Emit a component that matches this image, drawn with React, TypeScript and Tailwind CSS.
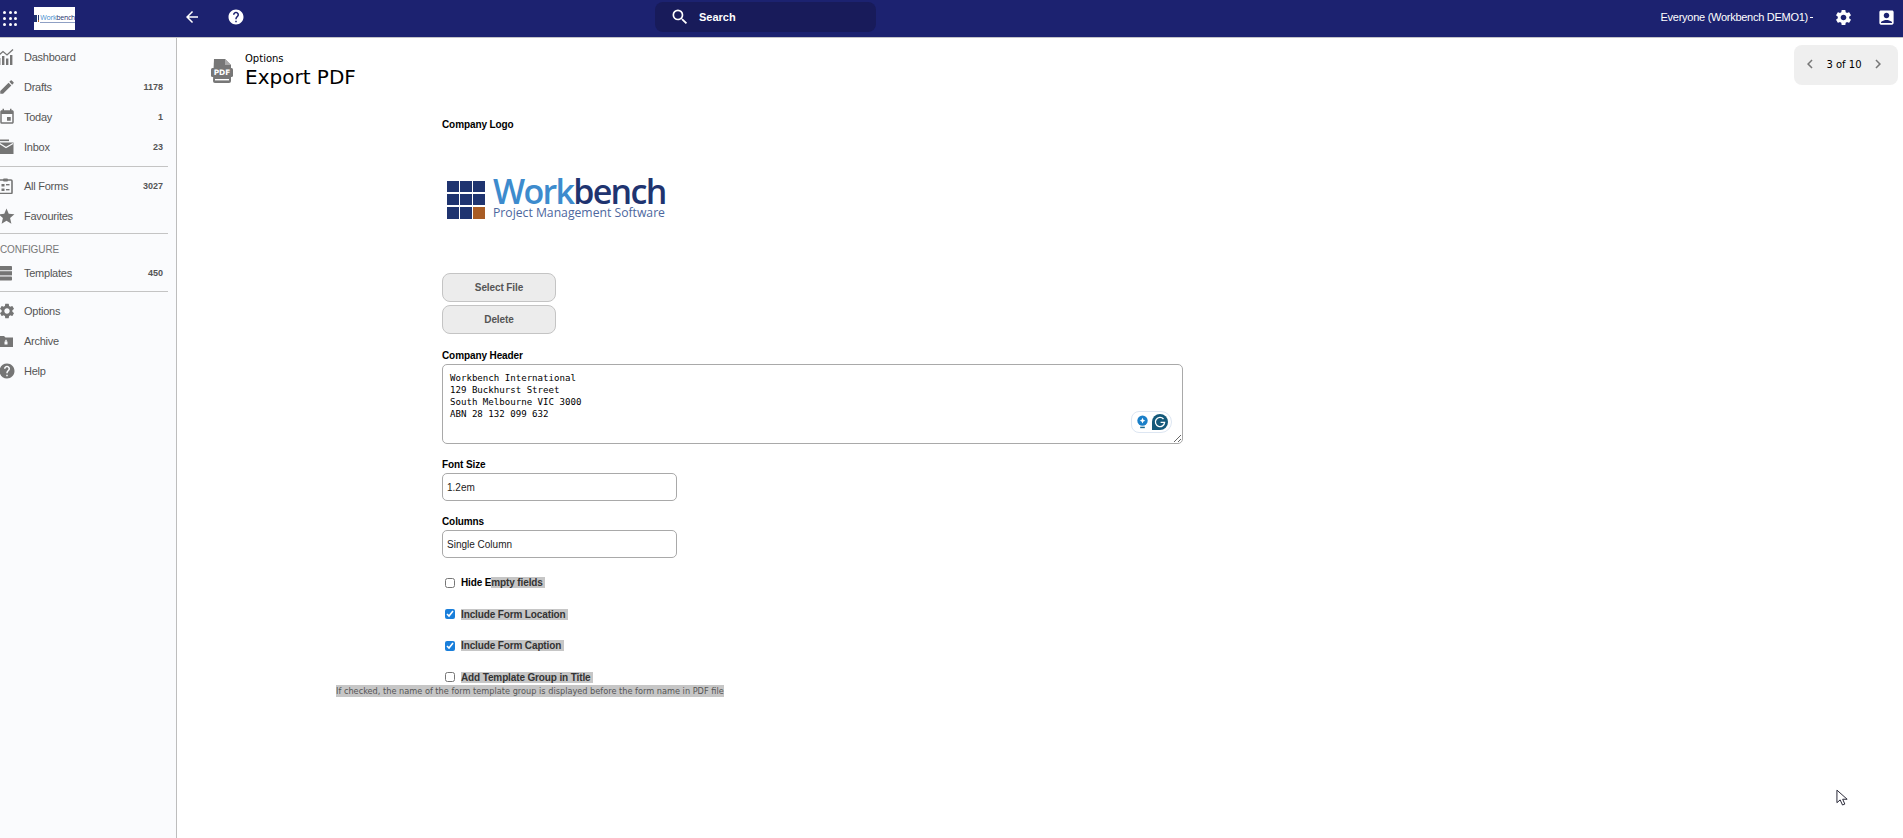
import { ReactNode } from 'react'
import {
  MdAccountBox,
  MdArrowBack,
  MdChevronLeft,
  MdChevronRight,
  MdEdit,
  MdEvent,
  MdHelp,
  MdSearch,
  MdSettings,
  MdStar,
} from 'react-icons/md'

const arial = { fontFamily: '"Liberation Sans", Arial, sans-serif' }

const DashboardIcon = () => (
  <svg viewBox="0 0 16 16" className="w-[16px] h-[16px] fill-[#757575]">
    <rect x="0" y="9" width="2.4" height="7" />
    <rect x="4" y="7" width="2.4" height="9" />
    <rect x="8" y="9.5" width="2.4" height="6.5" />
    <rect x="12" y="6" width="2.4" height="10" />
    <path d="M0 7 L5 2.5 L9 6 L15 0.5" fill="none" stroke="#757575" strokeWidth="1.3" />
  </svg>
)

const InboxIcon = () => (
  <svg viewBox="0 0 16 16" className="w-[16px] h-[16px] fill-[#757575]">
    <rect x="0" y="0.5" width="11" height="1.6" />
    <path d="M1 3.5 H15.5 V15 H1 Z" />
    <path d="M1.5 4.5 L8 8.5 L15 4.5" fill="none" stroke="#fafbfd" strokeWidth="1.3" />
  </svg>
)

const FormsIcon = () => (
  <svg viewBox="0 0 16 16" className="w-[16px] h-[16px]">
    <rect x="1" y="2" width="13" height="13.5" rx="1" fill="none" stroke="#757575" strokeWidth="1.6" />
    <rect x="5" y="0.5" width="5" height="3" rx="1" fill="#757575" />
    <rect x="3.5" y="6" width="3" height="2.5" fill="#757575" />
    <rect x="8" y="6" width="3.5" height="1.4" fill="#757575" />
    <rect x="3.5" y="10.5" width="3" height="2.5" fill="#757575" />
    <rect x="8" y="11" width="3.5" height="1.4" fill="#757575" />
  </svg>
)

const TemplatesIcon = () => (
  <svg viewBox="0 0 16 16" className="w-[16px] h-[16px] fill-[#757575]">
    <rect x="1" y="1" width="13" height="4.2" rx="0.8" />
    <rect x="1" y="6.2" width="13" height="4.2" />
    <rect x="1" y="11.4" width="13" height="4.2" rx="0.8" />
  </svg>
)

const ArchiveIcon = () => (
  <svg viewBox="0 0 16 16" className="w-[16px] h-[16px] fill-[#757575]">
    <path d="M0 3 H6 L7.5 4.5 H15 V14 H0 Z" />
    <rect x="6.5" y="8.5" width="3" height="3" fill="#fafbfd" />
    <rect x="7.3" y="6.8" width="1.4" height="2" fill="#fafbfd" />
  </svg>
)

const AppsIcon = () => (
  <div className="grid grid-cols-3 gap-[2.6px] w-[14px]">
    {Array.from({ length: 9 }).map((_, i) => (
      <span key={i} className="w-[3.2px] h-[3.2px] rounded-full bg-white" />
    ))}
  </div>
)

const PdfIcon = () => (
  <svg viewBox="0 0 22 24" className="w-[22px] h-[24px] shrink-0">
    <path d="M3 0 H14 L20 6 V22 a2 2 0 0 1 -2 2 H4 a2 2 0 0 1 -2 -2 Z" fill="#777" />
    <path d="M14 0 V6 H20" fill="#aaa" />
    <rect x="0" y="9" width="22" height="9" rx="1.5" fill="#777" />
    <text x="11" y="16.4" textAnchor="middle" fontSize="7.4" fontWeight="700" fill="#fff" fontFamily="DejaVu Sans, sans-serif">
      PDF
    </text>
    <rect x="4" y="20" width="14" height="1.4" fill="#fff" />
  </svg>
)

function Logo() {
  return (
    <div className="flex items-center gap-[8px] ml-[5px] mt-[46px] h-[45px]">
      <div className="grid grid-cols-3 grid-rows-3 gap-[1.5px] w-[38px] h-[38px]">
        {Array.from({ length: 9 }).map((_, i) => (
          <span key={i} className={i === 8 ? 'bg-[#a85c25]' : 'bg-[#1f3470]'} />
        ))}
      </div>
      <div className="flex flex-col" style={{ fontFamily: '"Open Sans", sans-serif' }}>
        <div className="text-[34px] leading-[31px] tracking-[-1.7px] font-semibold -mt-[4px]">
          <span className="text-[#3d8bcd]">Work</span>
          <span className="text-[#1f3470]">bench</span>
        </div>
        <div className="text-[12.2px] leading-[12px] text-[#4d679e] font-medium whitespace-nowrap">
          Project Management Software
        </div>
      </div>
    </div>
  )
}

function SmallLogo() {
  return (
    <div className="ml-[17px] mt-[3px] w-[41px] h-[23px] bg-white flex items-center justify-center gap-[1px]">
      <div className="grid grid-cols-3 grid-rows-3 gap-[0.4px] w-[7px] h-[7px]">
        {Array.from({ length: 9 }).map((_, i) => (
          <span key={i} className={i === 8 ? 'bg-[#a85c25]' : 'bg-[#1f3470]'} />
        ))}
      </div>
      <div className="flex flex-col" style={{ fontFamily: '"Open Sans", sans-serif' }}>
        <div className="text-[7px] leading-[7px] tracking-[-0.3px]">
          <span className="text-[#3d8bcd]">Work</span>
          <span className="text-[#1f3470]">bench</span>
        </div>
        <div className="h-[1px] mt-[1px] bg-[#8fa0c4]" />
      </div>
    </div>
  )
}

function NavItem({ icon, label, count }: { icon: ReactNode; label: string; count?: string }) {
  return (
    <div className="flex items-center h-[30px] pr-[13px]">
      <div className="w-[24px] -ml-[2px] flex items-center shrink-0">{icon}</div>
      <span className="ml-[2px] text-[11px] tracking-[-0.25px] text-[#555]">{label}</span>
      {count && <span className="ml-auto pt-[1px] text-[9px] font-bold text-[#555]">{count}</span>}
    </div>
  )
}

const Divider = () => <div className="h-[1px] bg-[#c4c4c4] w-[168px]" />

function Sidebar() {
  return (
    <aside className="w-[177px] shrink-0 bg-[#fafbfd] border-r border-[#bdbdbd] pt-[4px]">
      <NavItem icon={<DashboardIcon />} label="Dashboard" />
      <NavItem icon={<MdEdit size={18} className="text-[#757575]" />} label="Drafts" count="1178" />
      <NavItem icon={<MdEvent size={18} className="text-[#757575]" />} label="Today" count="1" />
      <NavItem icon={<InboxIcon />} label="Inbox" count="23" />
      <div className="mt-[4px]"><Divider /></div>
      <div className="mt-[4px]">
        <NavItem icon={<FormsIcon />} label="All Forms" count="3027" />
        <NavItem icon={<MdStar size={19} className="text-[#757575] -ml-[1px]" />} label="Favourites" />
      </div>
      <div className="mt-[2px]"><Divider /></div>
      <div className="mt-[10px] h-[12px] leading-[12px] text-[10px] tracking-[-0.1px] text-[#777]">CONFIGURE</div>
      <div className="mt-[2px]">
        <NavItem icon={<TemplatesIcon />} label="Templates" count="450" />
      </div>
      <div className="mt-[3px]"><Divider /></div>
      <div className="mt-[4px]">
        <NavItem icon={<MdSettings size={18} className="text-[#757575]" />} label="Options" />
        <NavItem icon={<ArchiveIcon />} label="Archive" />
        <NavItem icon={<MdHelp size={18} className="text-[#757575]" />} label="Help" />
      </div>
    </aside>
  )
}

function TopBar() {
  return (
    <header className="relative h-[38px] shrink-0 bg-[#1c2270] border-b border-[#c4c4c8] pb-[3px] flex items-center text-white">
      <div className="ml-[3px] mt-[3px]"><AppsIcon /></div>
      <SmallLogo />
      <MdArrowBack size={18} className="ml-[108px]" />
      <MdHelp size={18} className="ml-[26px]" />
      <div className="ml-[410px] w-[221px] h-[30px] rounded-lg bg-[#181b5a] flex items-center pl-[15px]">
        <MdSearch size={20} />
        <span className="ml-[9px] text-[11px] font-bold">Search</span>
      </div>
      <span className="ml-auto text-[11px] tracking-[-0.27px]">Everyone (Workbench DEMO1)</span>
      <span className="ml-[2px] w-[3px] h-[1px] bg-white" />
      <MdSettings size={19} className="ml-[21px]" />
      <MdAccountBox size={19} className="ml-[24px] mr-[7px]" />
    </header>
  )
}

function FieldLabel({ text }: { text: string }) {
  return <div className="mt-[15px] mb-[2px] h-[12px] leading-[12px] text-[10px] tracking-[-0.1px] font-bold text-black">{text}</div>
}

function GrayButton({ text }: { text: string }) {
  return (
    <button className="w-[114px] h-[29px] rounded-lg border border-[#c4c4c4] bg-[#ececec] text-[10px] tracking-[-0.1px] font-bold text-[#555]">
      {text}
    </button>
  )
}

function TextInput({ value }: { value: string }) {
  return (
    <input
      readOnly
      value={value}
      className="block w-[235px] h-[28px] px-[4px] rounded-[5px] border border-[#a9a9a9] bg-white text-[10px] text-[#222] outline-none"
    />
  )
}

function CheckRow({ checked, plain, marked }: { checked: boolean; plain?: string; marked: string }) {
  return (
    <div className="flex items-center h-[14px] mt-[17.5px]">
      <input
        type="checkbox"
        readOnly
        checked={checked}
        className="w-[10px] h-[10px] ml-[3px] accent-[#1a7fdb]"
      />
      <span className="ml-[6px] text-[10px] tracking-[-0.13px] leading-[13px] font-bold">
        {plain && <span className="text-black">{plain}</span>}
        <span className="bg-[#c6c6c6] text-[#333] whitespace-pre">{marked}</span>
      </span>
    </div>
  )
}

function GrammarlyBadge() {
  return (
    <div className="absolute right-[11px] bottom-[11px] w-[41px] h-[22px] rounded-l-[8px] rounded-r-[11px] border border-[#dde6f2] bg-white flex items-center justify-center gap-[3px]">
      <svg viewBox="0 0 14 16" className="w-[13px] h-[15px]">
        <circle cx="7" cy="6" r="5.6" fill="#1a7fc8" />
        <path d="M7 3 L8 5 L10 6 L8 7 L7 9 L6 7 L4 6 L6 5 Z" fill="#fff" />
        <rect x="4.5" y="12.5" width="5" height="1.6" fill="#1a6a90" />
      </svg>
      <svg viewBox="0 0 16 16" className="w-[16px] h-[16px]">
        <path d="M8 0 A8 8 0 1 1 8 16 H0 V8 A8 8 0 0 1 8 0 Z" fill="#14597a" />
        <path d="M11.5 5 A4.6 4.6 0 1 0 12.6 8.4 H8.6" fill="none" stroke="#fff" strokeWidth="1.3" />
      </svg>
    </div>
  )
}

function ExportForm() {
  return (
    <div className="ml-[231px] mt-[34px] w-[741px] flex flex-col items-start" style={arial}>
      <div className="h-[12px] leading-[12px] text-[10px] tracking-[-0.1px] font-bold text-black">Company Logo</div>
      <Logo />
      <div className="mt-[51px] flex flex-col gap-[3px]">
        <GrayButton text="Select File" />
        <GrayButton text="Delete" />
      </div>
      <div className="pt-[1px]">
        <FieldLabel text="Company Header" />
      </div>
      <div className="relative w-[741px] h-[80px]">
        <textarea
          readOnly
          defaultValue={'Workbench International\n129 Buckhurst Street\nSouth Melbourne VIC 3000\nABN 28 132 099 632'}
          className="block w-full h-full px-[7px] py-[7px] rounded-[5px] border border-[#a9a9a9] bg-white text-[9.1px] leading-[12px] text-black outline-none"
          style={{ fontFamily: '"DejaVu Sans Mono", monospace' }}
        />
        <GrammarlyBadge />
      </div>
      <FieldLabel text="Font Size" />
      <TextInput value="1.2em" />
      <FieldLabel text="Columns" />
      <TextInput value="Single Column" />
      <CheckRow checked={false} plain="Hide E" marked="mpty fields " />
      <CheckRow checked marked="Include Form Location " />
      <CheckRow checked marked="Include Form Caption " />
      <CheckRow checked={false} marked="Add Template Group in Title " />
      <div
        className="-ml-[106px] mt-[1px] h-[12px] leading-[12px] text-[8.2px] text-[#555] bg-[#c6c6c6] whitespace-nowrap"
        style={{ fontFamily: '"DejaVu Sans", sans-serif' }}
      >
        If checked, the name of the form template group is displayed before the form name in PDF file
      </div>
    </div>
  )
}

export default function App() {
  return (
    <div className="relative h-screen overflow-hidden flex flex-col bg-white" style={arial}>
      <TopBar />
      <div className="flex flex-1 min-h-0">
        <Sidebar />
        <main className="flex-1 pl-[34px] pr-[5px] pt-[7px]">
          <div className="flex items-start justify-between h-[40px]">
            <div className="flex items-center gap-[12px] mt-[8px]" style={{ fontFamily: '"DejaVu Sans", sans-serif' }}>
              <PdfIcon />
              <div>
                <div className="text-[10px] leading-[12px] text-black">Options</div>
                <div className="text-[20px] leading-[24px] text-black">Export PDF</div>
              </div>
            </div>
            <div
              className="w-[104px] h-[40px] rounded-lg bg-[#efefef] flex items-center justify-between pl-[7px] pr-[11px] pb-[2px] text-[10px] text-black"
              style={{ fontFamily: '"DejaVu Sans", sans-serif' }}
            >
              <MdChevronLeft size={18} className="text-[#777]" />
              <span>3 of 10</span>
              <MdChevronRight size={18} className="text-[#777]" />
            </div>
          </div>
          <ExportForm />
        </main>
      </div>
      <svg viewBox="0 0 14 20" className="absolute left-[1836px] top-[789px] w-[13px] h-[19px]">
        <path d="M1 1 V14.5 L4.5 11.5 L7 17 L9.5 16 L7.2 10.8 H12 Z" fill="#fff" stroke="#1a1a2a" strokeWidth="1" />
      </svg>
    </div>
  )
}
